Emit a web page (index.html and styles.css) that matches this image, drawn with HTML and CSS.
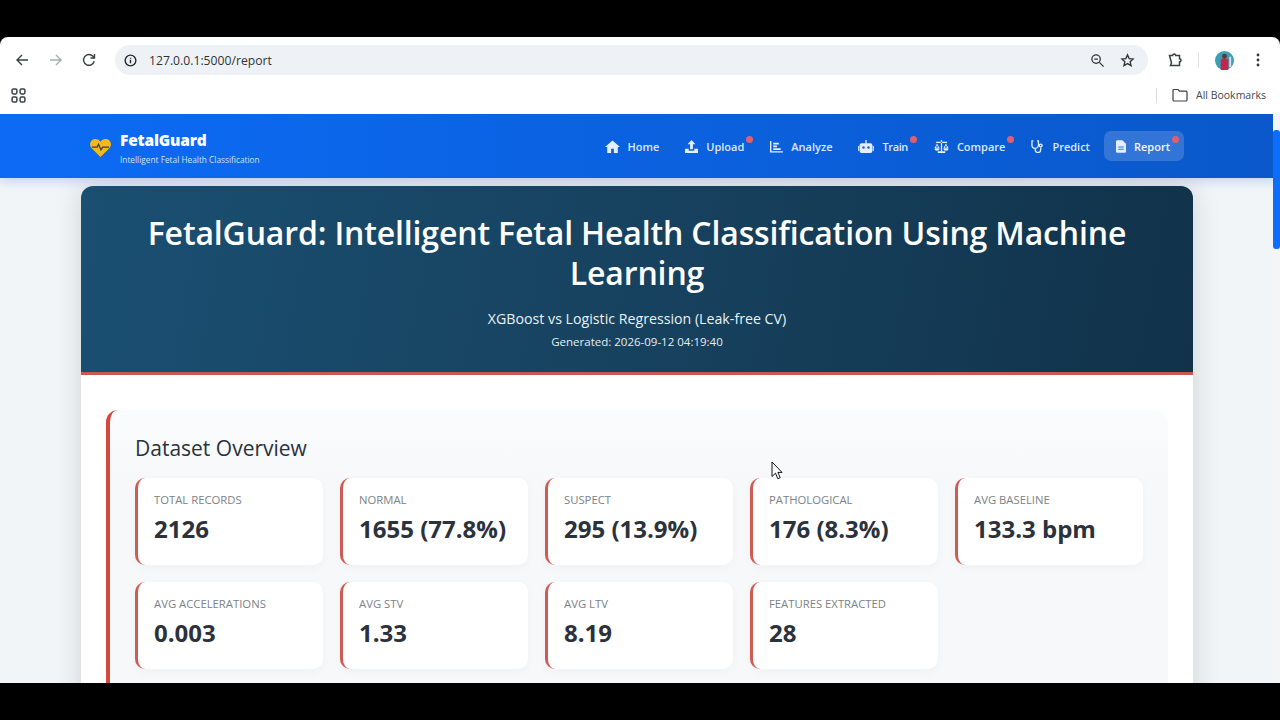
FILE: index.html
```html
<!DOCTYPE html>
<html lang="en">
<head>
<meta charset="utf-8">
<title>FetalGuard Report</title>
<link rel="stylesheet" href="styles.css">
</head>
<body>
<div class="letterbox-top"></div>
<div class="browser">
  <div class="toolbar">
    <svg class="tb-icon back" viewBox="0 0 16 16"><path d="M14 8H3M8 3 3 8l5 5"/></svg>
    <svg class="tb-icon fwd" viewBox="0 0 16 16"><path d="M2 8h11M8 3l5 5-5 5"/></svg>
    <svg class="tb-icon reload" viewBox="0 0 16 16"><path d="M13.2 9.2A5.4 5.4 0 1 1 12 4.300L13.500 6M13.500 2v4h-4"/></svg>
    <div class="omnibox">
      <svg class="info" viewBox="0 0 16 16"><circle cx="8" cy="8" r="5.700"/><path d="M8 7.300v3.600M8 5v1.200"/></svg>
      <span class="url">127.0.0.1:5000/report</span>
      <span class="spring"></span>
      <svg class="omni-icon" viewBox="0 0 16 16"><circle cx="6.500" cy="6.500" r="4.500"/><path d="M4.500 6.500h4M10 10l4.500 4.500"/></svg>
      <svg class="omni-icon" viewBox="0 0 16 16"><path d="m8 2 1.800 4 4.200.4-3.200 2.900 1 4.200L8 11.300l-3.800 2.200 1-4.200L2 6.400 6.200 6z"/></svg>
    </div>
    <svg class="tb-icon puzzle" viewBox="0 0 16 16"><path d="M2.500 3.500h3.200a1.500 1.500 0 0 1 3 0h3.800v3.300a1.500 1.500 0 0 1 0 3v3.700H3.500l1-2.500-2-7.500z"/></svg>
    <span class="tb-sep"></span>
    <svg class="avatar" viewBox="0 0 20 20"><circle cx="10" cy="10" r="10" fill="#3d9fb5"/><path d="M6 20V9l4-2 4 2v11z" fill="#c2274f"/><circle cx="10" cy="5.500" r="2.500" fill="#5b3a33"/><path d="M15 6h2v11h-2z" fill="#d7dfe6"/></svg>
    <svg class="menu" viewBox="0 0 4 16"><circle cx="2" cy="3" r="1.400"/><circle cx="2" cy="8" r="1.400"/><circle cx="2" cy="13" r="1.400"/></svg>
  </div>
  <div class="bookmarks">
    <svg class="apps" viewBox="0 0 14 14"><rect x="1" y="1" width="4.500" height="4.500" rx="1.200"/><rect x="8.500" y="1" width="4.500" height="4.500" rx="1.200"/><rect x="1" y="8.500" width="4.500" height="4.500" rx="1.200"/><rect x="8.500" y="8.500" width="4.500" height="4.500" rx="1.200"/></svg>
    <span class="spring"></span>
    <span class="bm-sep"></span>
    <svg class="folder" viewBox="0 0 16 14"><path d="M1 2.500C1 1.700 1.500 1.500 2 1.500h4l1.500 1.700H14c.6 0 1 .4 1 1V12c0 .6-.4 1-1 1H2c-.6 0-1-.4-1-1z"/></svg>
    <span class="bm-label">All Bookmarks</span>
  </div>
  <div class="viewport">
    <nav class="navbar">
      <div class="brand">
        <svg class="brand-icon" viewBox="0 0 24 22"><path d="M12 21 2.500 11.500C-.5 8 1.500 2 6.500 2 9 2 11 3.200 12 5c1-1.800 3-3 5.500-3 5 0 7 6 4 9.500z" fill="#f2b91d"/><path d="M3 10.500h5.500l1.500-3 2.500 6 1.800-3H21" fill="none" stroke="#33414f" stroke-width="1.300"/></svg>
        <div>
          <div class="brand-name">FetalGuard</div>
          <div class="brand-sub">Intelligent Fetal Health Classification</div>
        </div>
      </div>
      <div class="nav-links">
        <a class="nav-link l-home"><svg viewBox="0 0 16 14"><path d="M8 .5 0 7.500h2.300V14h4.200V9.500h3V14h4.200V7.500H16z"/></svg>Home</a>
        <a class="nav-link l-upload dot"><svg viewBox="0 0 14 14"><path d="M7 0 2.800 4.500h2.700V10h3V4.500h2.700zM0 9.500h4V11.500h6V9.500h4V14H0z"/></svg>Upload</a>
        <a class="nav-link l-analyze"><svg viewBox="0 0 14 14"><path d="M0 1h1.500v11H14v1.500H0zM3.500 3h6v1.800h-6zM3.500 6h4v1.800h-4zM3.500 9h8v1.800h-8z"/></svg>Analyze</a>
        <a class="nav-link l-train dot"><svg viewBox="0 0 17 14"><path d="M4 3.500h9a2.500 2.500 0 0 1 2.500 2.500v5.500A2.500 2.500 0 0 1 13 14H4a2.500 2.500 0 0 1-2.500-2.500V6A2.500 2.500 0 0 1 4 3.500zM7.800 0h1.400v3.500H7.800zM0 6.500h1v5H0zM16 6.500h1v5h-1z"/><circle cx="5.800" cy="8" r="1.300" fill="#0f62d8"/><circle cx="11.200" cy="8" r="1.300" fill="#0f62d8"/></svg>Train</a>
        <a class="nav-link l-compare dot"><svg viewBox="0 0 16 14"><path d="M7.300 0h1.400v12H12v2H4v-2h3.300zM2 2h12v1.300H2zM3.200 3.800.5 8.500h5.400zm0 1.800 1.300 2.400H1.900zM12.800 3.800l-2.700 4.700h5.400zm0 1.800 1.300 2.400h-2.600zM.5 9h5.400a2.700 2.700 0 0 1-5.400 0zM10.100 9h5.400a2.700 2.700 0 0 1-5.400 0z" fill-rule="evenodd"/></svg>Compare</a>
        <a class="nav-link l-predict"><svg class="stroke" viewBox="0 0 14 14"><path d="M2.500 1H1v4.500a3.500 3.500 0 0 0 7 0V1H6.500M4.500 9v1.500a3 3 0 0 0 6 0V8"/><circle cx="10.500" cy="6" r="1.500"/></svg>Predict</a>
        <a class="nav-link active l-report dot"><svg viewBox="0 0 11 14"><path d="M1.500 0H7l4 4v8.500c0 .8-.7 1.500-1.500 1.500h-8C.7 14 0 13.300 0 12.500v-11C0 .7.700 0 1.500 0zM2.500 7v1.200h6V7zm0 2.500v1.200h6V9.500z" fill-rule="evenodd"/></svg>Report</a>
      </div>
    </nav>
    <main class="page">
      <div class="report">
        <header class="hero">
          <h1>FetalGuard: Intelligent Fetal Health Classification Using Machine Learning</h1>
          <p class="hero-sub">XGBoost vs Logistic Regression (Leak-free CV)</p>
          <p class="hero-date">Generated: 2026-09-12 04:19:40</p>
        </header>
        <div class="report-body">
          <section class="section">
            <h2>Dataset Overview</h2>
            <div class="stats">
              <div class="stat"><div class="stat-label">TOTAL RECORDS</div><div class="stat-value">2126</div></div>
              <div class="stat"><div class="stat-label">NORMAL</div><div class="stat-value">1655 (77.8%)</div></div>
              <div class="stat"><div class="stat-label">SUSPECT</div><div class="stat-value">295 (13.9%)</div></div>
              <div class="stat"><div class="stat-label">PATHOLOGICAL</div><div class="stat-value">176 (8.3%)</div></div>
              <div class="stat"><div class="stat-label">AVG BASELINE</div><div class="stat-value">133.3 bpm</div></div>
              <div class="stat"><div class="stat-label">AVG ACCELERATIONS</div><div class="stat-value">0.003</div></div>
              <div class="stat"><div class="stat-label">AVG STV</div><div class="stat-value">1.33</div></div>
              <div class="stat"><div class="stat-label">AVG LTV</div><div class="stat-value">8.19</div></div>
              <div class="stat"><div class="stat-label">FEATURES EXTRACTED</div><div class="stat-value">28</div></div>
            </div>
          </section>
        </div>
      </div>
      <svg class="cursor" viewBox="0 0 12 19"><path d="M1 1v14.500l3.500-3.300 2.300 5.500 2.400-1-2.300-5.300H11z"/></svg>
    </main>
    <div class="scrollbar"><div class="thumb"></div></div>
  </div>
</div>
<div class="letterbox-bottom"></div>
</body>
</html>
```
FILE: styles.css
```css
* { box-sizing: border-box; }
html, body { margin: 0; height: 720px; overflow: hidden; background: #000; }
body { display: flex; flex-direction: column; font-family: "Open Sans", "Noto Sans", sans-serif; color: #2c3440; }
.letterbox-top { height: 37px; flex: none; background: #000; }
.letterbox-bottom { height: 37px; flex: none; background: #000; }
.browser { flex: 1; min-height: 0; display: flex; flex-direction: column; background: #fff; border-radius: 8px 8px 0 0; overflow: hidden; }
.toolbar { height: 46px; flex: none; display: flex; align-items: center; padding: 0 0 0 14px; }
.tb-icon { width: 16px; height: 16px; fill: none; stroke: #3c4043; stroke-width: 1.400; flex: none; }
.back { margin-right: 18px; }
.fwd { stroke: #a9adb2; margin-right: 17px; }
.reload { margin-right: 18px; }
.omnibox { width: 1033px; height: 30px; border-radius: 15px; background: #eef2f7; display: flex; align-items: center; padding: 0 13px 0 8px; flex: none; }
.info { width: 15px; height: 15px; fill: none; stroke: #26282b; stroke-width: 1.500; flex: none; }
.url { font: 12.200px "Open Sans", sans-serif; color: #303336; margin-left: 11px; }
.spring { flex: 1; }
.omni-icon { width: 15px; height: 15px; fill: none; stroke: #33373a; stroke-width: 1.400; margin-left: 15px; flex: none; }
.puzzle { margin-left: 19px; stroke-width: 1.500; }
.tb-sep { width: 1px; height: 16px; background: #dfe3e8; margin: 0 16px 0 15px; flex: none; }
.avatar { width: 19px; height: 19px; flex: none; }
.menu { width: 4px; height: 16px; margin-left: 22px; fill: #33373a; flex: none; }
.bookmarks { height: 31px; flex: none; display: flex; align-items: center; padding: 0 14px 7px 11px; }
.apps { width: 15px; height: 15px; fill: none; stroke: #3c4043; stroke-width: 1.400; flex: none; }
.bm-sep { width: 1px; height: 15px; background: #d8dce1; margin-right: 15px; }
.folder { width: 16px; height: 14px; fill: none; stroke: #3c4043; stroke-width: 1.200; margin-right: 8px; }
.bm-label { font: 10.500px "Open Sans", sans-serif; color: #45494d; }
.viewport { flex: 1; min-height: 0; display: flex; flex-direction: column; position: relative; background: #f1f5f8; overflow: hidden; }
.navbar { height: 64px; flex: none; display: flex; align-items: center; padding: 0 96px 0 89px; background: linear-gradient(90deg, #0c6bf5 0%, #0a58ca 100%); box-shadow: 0 3px 10px rgba(13,90,230,.22); color: #fff; position: relative; z-index: 2; }
.brand { display: flex; align-items: center; gap: 8px; }
.brand-icon { width: 23px; height: 21px; margin-top: 2px; }
.brand-name { font: 800 15.500px/18px "Open Sans", sans-serif; letter-spacing: -.2px; margin-top: 3px; }
.brand-sub { font: 8.300px/11px "Open Sans", sans-serif; color: #cfe2ff; margin-top: 5px; }
.nav-links { margin-left: auto; display: flex; align-items: center; }
.nav-link { position: relative; display: flex; align-items: center; gap: 8px; height: 30px; padding: 0 14px 0 12px; border-radius: 7px; font: 600 11px "Open Sans", sans-serif; color: #dbe8fd; }
.nav-link svg { width: 13px; height: 13px; fill: #e4eefe; flex: none; }
.nav-link svg.stroke { fill: none; stroke: #e4eefe; stroke-width: 1.400; }
.l-home svg { width: 15px; margin-right: -1px; }
.l-train { letter-spacing: -.4px; }
.l-train svg { width: 16px; }
.l-compare svg { width: 15px; }
.l-report svg { width: 10px; }
.nav-link.active { background: rgba(255,255,255,.17); color: #f3f7ff; }
.dot::after { content: ""; position: absolute; top: 5px; right: 5px; width: 7px; height: 7px; border-radius: 50%; background: #df5f70; }
.page { flex: 1; min-height: 0; position: relative; overflow: hidden; padding: 8px 87px 0 81px; background: #f2f5f8; }
.report { background: #fff; border-radius: 12px 12px 0 0; box-shadow: 0 0 28px rgba(0,0,0,.14); height: 600px; }
.hero { height: 189px; padding: 27px 20px 0; text-align: center; color: #fff; background: linear-gradient(100deg, #1a4f72 0%, #17425f 50%, #11324a 100%); border-bottom: 3px solid #c9584f; border-radius: 12px 12px 0 0; }
.hero h1 { margin: 0; font: 600 32px/40px "Open Sans", "Noto Sans", sans-serif; letter-spacing: -.15px; }
.hero-sub { margin: 16px 0 0; font: 14.200px/20px "Open Sans", sans-serif; color: #eaf1f5; }
.hero-date { margin: 5px 0 0; font: 11.500px/16px "Open Sans", sans-serif; color: #e5edf2; }
.report-body { padding: 35px 25px 0; }
.section { background: linear-gradient(180deg, #fbfcfd, #f7f8fa 70px); border-left: 4px solid #d5493c; border-radius: 12px; padding: 24px 28px 0 25px; height: 400px; }
.section h2 { margin: 0; font: 500 21px/28px "Open Sans", sans-serif; color: #2a323c; }
.stats { display: grid; grid-template-columns: repeat(5, 188px); grid-auto-rows: 87px; gap: 17px; margin-top: 16px; }
.stat { background: #fff; border-left: 3px solid #cf5b55; border-radius: 10px; padding: 14px 16px; box-shadow: 0 3px 10px rgba(0,0,0,.03); }
.stat-label { font: 400 11.300px/16px "Open Sans", sans-serif; color: #7c8287; }
.stat-value { font: 700 24px/30px "Open Sans", sans-serif; color: #2b323c; margin-top: 6px; white-space: nowrap; }
.scrollbar { position: absolute; top: 0; right: 0; bottom: 0; width: 7px; background: #f4f5f6; z-index: 3; }
.thumb { position: absolute; top: 16px; left: 0; width: 7px; height: 119px; border-radius: 3px; background: #0d6efd; }
.cursor { position: absolute; left: 771px; top: 283px; width: 12px; height: 19px; fill: #fff; stroke: #111; stroke-width: 1; }
```
